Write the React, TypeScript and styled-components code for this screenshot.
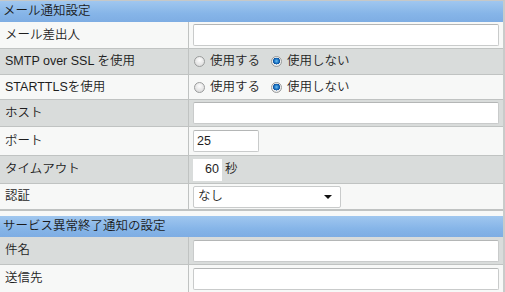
import { createGlobalStyle } from "styled-components";
import styled from "styled-components";

const GlobalStyle = createGlobalStyle`
  html, body {
    margin: 0;
    padding: 0;
    background: #f7f8f7;
  }
  body {
    font: 350 12.5px/1.2 "Liberation Sans", "Noto Sans CJK JP", sans-serif;
    color: #1e1e1e;
  }
`;

const Page = styled.div`
  width: 503px;
  border-right: 2px solid #c9cbca;
  border-top: 1px solid #c6c8c7;
  background: #f7f8f7;
`;

const Section = styled.section`
  & + & {
    border-top: 1px solid #c0c3c2;
    padding-top: 5px;
  }
`;

const Header = styled.div`
  height: 21px;
  display: flex;
  align-items: center;
  padding-left: 3px;
  color: #1b1b1b;
  background: linear-gradient(#a0c7ef, #86b5e8 60%, #7eade3);
`;

const Row = styled.div<{ $h: number; $gray?: boolean; $last?: boolean }>`
  display: grid;
  grid-template-columns: 189px 1fr;
  height: ${(p) => p.$h}px;
  background: ${(p) => (p.$gray ? "#d9dcdb" : "#f7f8f7")};
  border-bottom: ${(p) => (p.$last ? "none" : "1px solid #c0c3c2")};
`;

const Label = styled.div`
  display: flex;
  align-items: center;
  padding-left: 5px;
  border-right: 1px solid #c0c3c2;
  white-space: nowrap;
`;

const Value = styled.div`
  display: flex;
  align-items: center;
  padding: 0 4px;
  gap: 3px;
  white-space: nowrap;
`;

const TextBox = styled.div<{ $w?: number }>`
  box-sizing: border-box;
  width: ${(p) => (p.$w ? `${p.$w}px` : "100%")};
  height: 22px;
  background: #fff;
  border: 1px solid #c9cbcb;
  border-top-color: #b4b6b6;
  border-radius: 2px;
  padding: 0 3px;
  display: flex;
  align-items: center;
`;

const NumBox = styled.div`
  width: 29px;
  height: 22px;
  background: #fff;
  display: flex;
  align-items: center;
  justify-content: flex-end;
  padding-right: 3px;
  box-sizing: border-box;
`;

const Select = styled.div`
  box-sizing: border-box;
  width: 148px;
  height: 22px;
  background: #fff;
  border: 1px solid #c9cbcb;
  border-radius: 2px;
  display: flex;
  align-items: center;
  justify-content: space-between;
  padding: 0 8px 0 4px;

  &::after {
    content: "";
    border-left: 4px solid transparent;
    border-right: 4px solid transparent;
    border-top: 4px solid #111;
  }
`;

const RadioGroup = styled.div`
  display: flex;
  align-items: center;
  padding-left: 5px;
`;

const RadioLabel = styled.label`
  display: flex;
  align-items: center;
  gap: 5px;
  & + & {
    margin-left: 11px;
  }
`;

const Radio = styled.span<{ $on?: boolean }>`
  width: 11px;
  height: 11px;
  box-sizing: border-box;
  border-radius: 50%;
  border: 1px solid #9a9c9c;
  background: ${(p) =>
    p.$on
      ? "radial-gradient(circle at 50% 45%, #6fc0f0 0, #1b74c4 2.2px, #0d4f99 3.3px, #f2f2f2 3.6px, #d6d6d6 100%)"
      : "radial-gradient(circle at 50% 35%, #fdfdfd, #d4d4d4)"};
`;

const RadioPair = ({ on }: { on: 0 | 1 }) => (
  <RadioGroup>
    <RadioLabel>
      <Radio $on={on === 0} />
      使用する
    </RadioLabel>
    <RadioLabel>
      <Radio $on={on === 1} />
      使用しない
    </RadioLabel>
  </RadioGroup>
);

const App = () => {
  return (
    <Page>
      <GlobalStyle />
      <Section>
        <Header>メール通知設定</Header>
        <Row $h={26}>
          <Label>メール差出人</Label>
          <Value>
            <TextBox />
          </Value>
        </Row>
        <Row $h={25} $gray>
          <Label>SMTP over SSL を使用</Label>
          <RadioPair on={1} />
        </Row>
        <Row $h={24}>
          <Label>STARTTLSを使用</Label>
          <RadioPair on={1} />
        </Row>
        <Row $h={26} $gray>
          <Label>ホスト</Label>
          <Value>
            <TextBox />
          </Value>
        </Row>
        <Row $h={28}>
          <Label>ポート</Label>
          <Value>
            <TextBox $w={66}>25</TextBox>
          </Value>
        </Row>
        <Row $h={27} $gray>
          <Label>タイムアウト</Label>
          <Value>
            <NumBox>60</NumBox>秒
          </Value>
        </Row>
        <Row $h={25}>
          <Label>認証</Label>
          <Value>
            <Select>なし</Select>
          </Value>
        </Row>
      </Section>
      <Section>
        <Header>サービス異常終了通知の設定</Header>
        <Row $h={27} $gray>
          <Label>件名</Label>
          <Value>
            <TextBox />
          </Value>
        </Row>
        <Row $h={27} $last>
          <Label>送信先</Label>
          <Value>
            <TextBox />
          </Value>
        </Row>
      </Section>
    </Page>
  );
};

export default App;
